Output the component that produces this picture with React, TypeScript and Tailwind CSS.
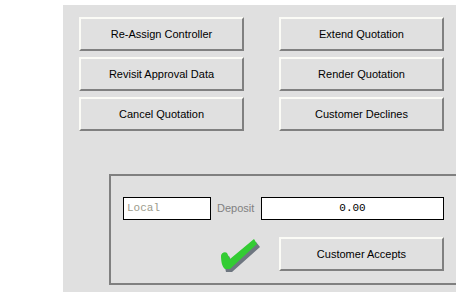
const buttons = [
  'Re-Assign Controller',
  'Extend Quotation',
  'Revisit Approval Data',
  'Render Quotation',
  'Cancel Quotation',
  'Customer Declines',
]

function Btn({ label }: { label: string }) {
  return (
    <button className="w-[165px] h-[34px] bg-[#e0e0e0] border-t-2 border-l-2 border-r-2 border-b-2 border-t-[#fbfbf6] border-l-[#fbfbf6] border-r-[#808080] border-b-[#808080] text-[11px] text-black flex items-center justify-center">
      {label}
    </button>
  )
}

function Check() {
  return (
    <svg width="40" height="36" viewBox="0 0 40 36">
      <path d="M3 22 L9 19 L12 25 L36 5 L40 10 L12 35 L6 35 Z" fill="#6e7680" />
      <path d="M1 19 C1 16 5 14 7 16 L10 22 L34 2 L37 7 L10 32 L5 32 C2 30 1 24 1 19 Z" fill="#33cc33" />
    </svg>
  )
}

export default function App() {
  return (
    <div className="w-[465px] h-[299px] bg-white pl-[63px] pt-[5px] font-['Liberation_Sans',Arial,sans-serif]">
      <div className="w-[393px] h-[287px] bg-[#e0e0e0] overflow-hidden">
        <div className="grid grid-cols-[165px_165px] gap-x-[35px] gap-y-[6px] pl-[16px] pt-[12px]">
          {buttons.map((b) => (
            <Btn key={b} label={b} />
          ))}
        </div>

        <div className="ml-[46px] mt-[43px] w-[360px] h-[111px] border-2 border-[#808080]">
          <div className="flex items-center pl-[12px] pt-[21px]">
            <div className="w-[88px] h-[23px] bg-white border border-black flex items-center pl-[3px] text-[11px] text-[#9c9c8c] font-['Liberation_Mono',monospace]">
              Local
            </div>
            <span className="ml-[6px] w-[44px] text-[11px] text-[#808080]">Deposit</span>
            <div className="w-[183px] h-[23px] bg-white border border-black flex items-center justify-center text-[11px] text-black font-['Liberation_Mono',monospace]">
              0.00
            </div>
          </div>
          <div className="flex items-start pl-[109px] mt-[17px]">
            <Check />
            <div className="ml-[19px]">
              <Btn label="Customer Accepts" />
            </div>
          </div>
        </div>
      </div>
    </div>
  )
}
